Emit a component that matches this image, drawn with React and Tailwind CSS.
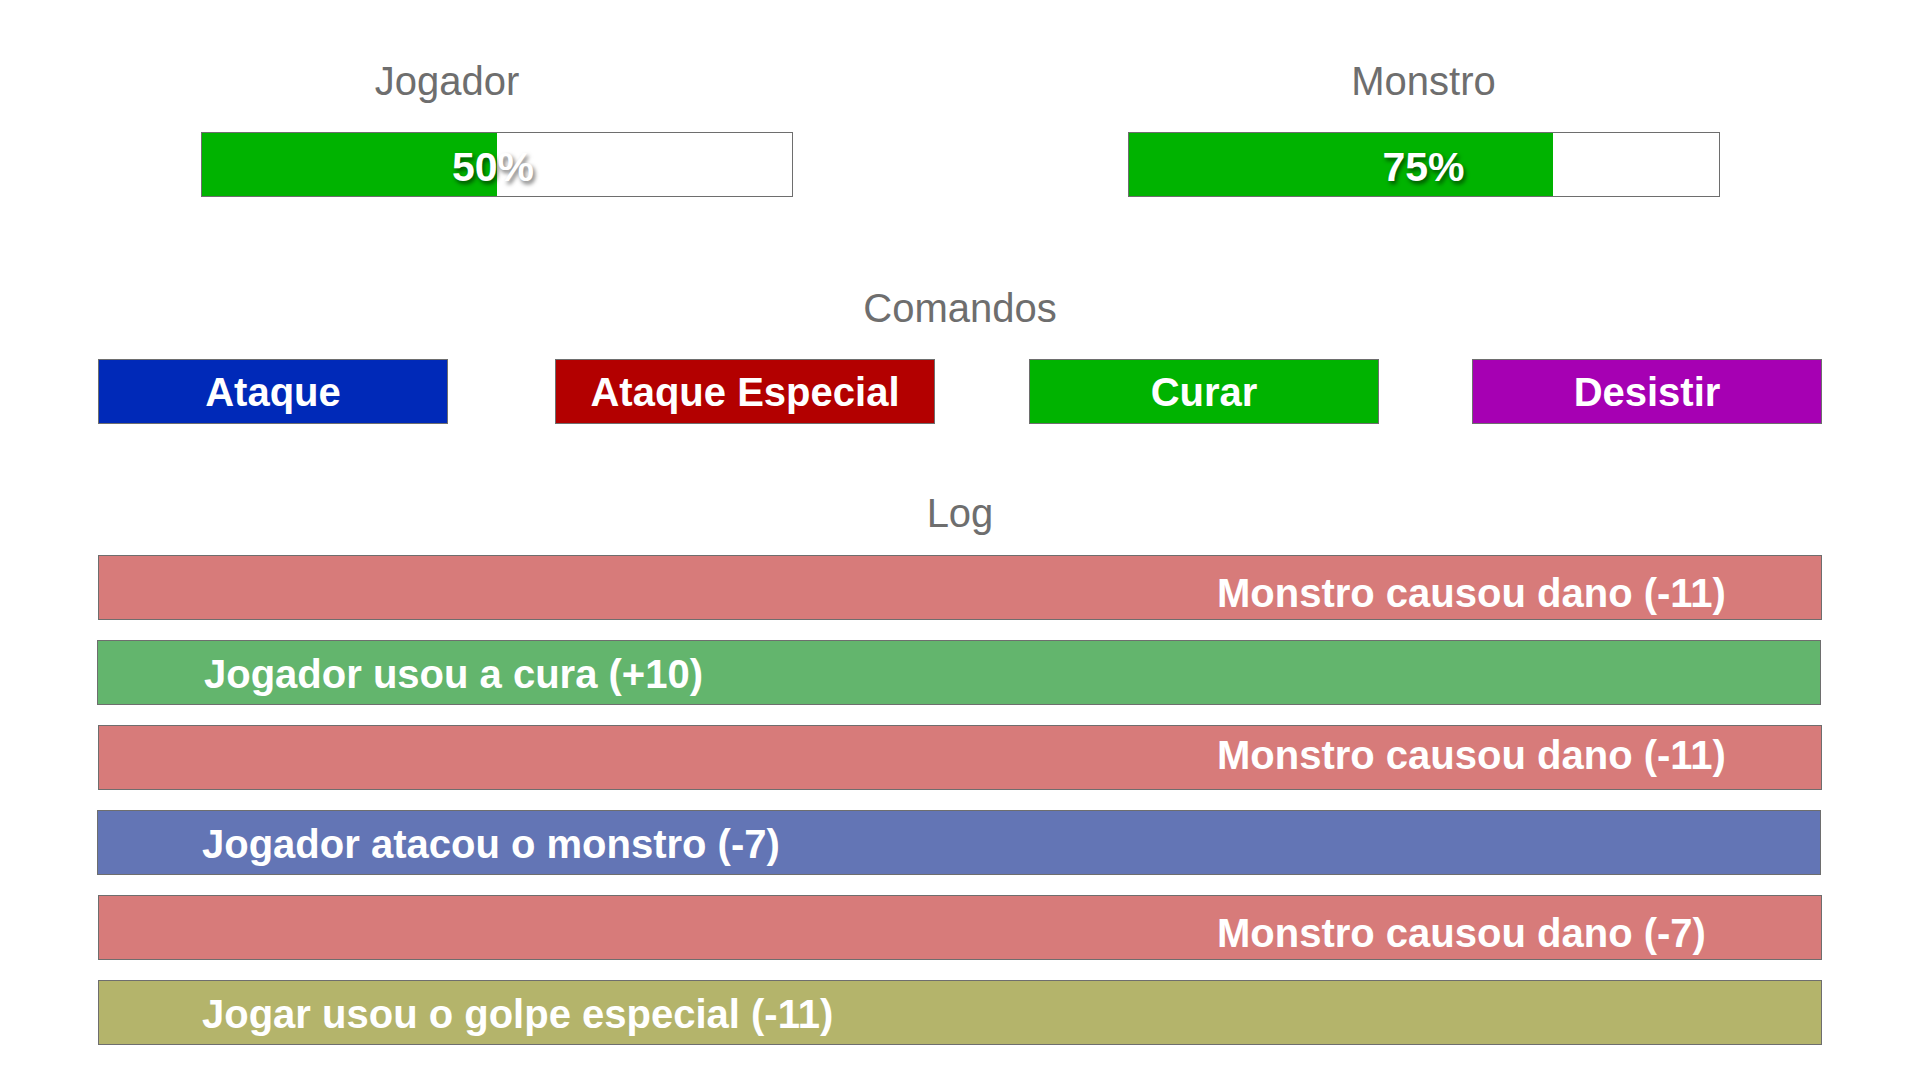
import React from 'react';

const players = [
    { name: 'Jogador', value: 50, fill: 50, labelClass: 'mr-[99px]', valueClass: 'pr-[7px]' },
    { name: 'Monstro', value: 75, fill: 72, labelClass: '', valueClass: '' },
];

const commands = [
    { label: 'Ataque', className: 'w-[350px] bg-[#0029b8]' },
    { label: 'Ataque Especial', className: 'w-[380px] ml-[107px] bg-[#b30000]' },
    { label: 'Curar', className: 'w-[350px] ml-[94px] bg-[#00b300]' },
    { label: 'Desistir', className: 'w-[350px] ml-[93px] bg-[#a600b3]' },
];

// ordem do log: mais recente primeiro
const logs = [
    { text: 'Monstro causou dano (-11)', className: 'bg-[#d77b7a] pl-[1118px] pt-[10px]' },
    { text: 'Jogador usou a cura (+10)', className: 'bg-[#63b56d] pl-[106px] pt-[3px] -ml-px' },
    { text: 'Monstro causou dano (-11)', className: 'bg-[#d77b7a] pl-[1118px] pb-[6px]' },
    { text: 'Jogador atacou o monstro (-7)', className: 'bg-[#6375b5] pl-[104px] pt-[3px] -ml-px' },
    { text: 'Monstro causou dano (-7)', className: 'bg-[#d77b7a] pl-[1118px] pt-[10px]' },
    { text: 'Jogar usou o golpe especial (-11)', className: 'bg-[#b4b46b] pl-[103px] pt-[3px]' },
];

const Title = ({ children, className = '' }) => (
    <h2 className={`text-center text-[40px] leading-[40px] font-normal text-[#6e6e6e] ${className}`}>
        {children}
    </h2>
);

const App = () => {
    return (
        <div className="w-[1920px] h-[1080px] bg-white font-['Liberation_Sans',Arial,sans-serif] overflow-hidden">
            {/* Barras de vida */}
            <section className="flex justify-center gap-[335px] pt-[61px]">
                {players.map((p) => (
                    <div key={p.name} className="w-[592px] flex flex-col">
                        <Title className={p.labelClass}>{p.name}</Title>
                        <div className="relative mt-[31px] h-[65px] w-[592px] border border-[#6e6e6e] bg-white">
                            <div className="h-full bg-[#00b300]" style={{ width: `${p.fill}%` }}></div>
                            <span className={`absolute inset-0 flex items-center justify-center pt-[6px] text-[41px] font-bold text-white [text-shadow:2px_3px_4px_rgba(0,0,0,0.55)] ${p.valueClass}`}>
                                {p.value}%
                            </span>
                        </div>
                    </div>
                ))}
            </section>

            {/* Comandos */}
            <section className="mt-[91px]">
                <Title>Comandos</Title>
                <div className="mt-[31px] flex w-[1724px] mx-auto">
                    {commands.map((c) => (
                        <button
                            key={c.label}
                            className={`h-[65px] border border-[#6e6e6e] flex items-center justify-center text-[40px] font-bold text-white ${c.className}`}
                        >
                            {c.label}
                        </button>
                    ))}
                </div>
            </section>

            {/* Log */}
            <section className="mt-[69px]">
                <Title>Log</Title>
                <ul className="mt-[22px] w-[1724px] mx-auto flex flex-col gap-[20px]">
                    {logs.map((l, i) => (
                        <li
                            key={i}
                            className={`h-[65px] w-[1724px] border border-[#6e6e6e] flex items-center text-[40px] leading-[40px] font-bold text-white ${l.className}`}
                        >
                            {l.text}
                        </li>
                    ))}
                </ul>
            </section>
        </div>
    );
};

export default App;
